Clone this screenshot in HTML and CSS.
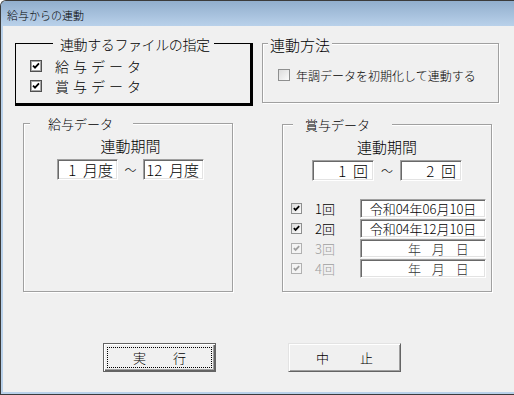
FILE: index.html
```html
<!DOCTYPE html>
<html lang="ja">
<head>
	<meta charset="UTF-8">
	<title>給与からの連動</title>
	<link rel="stylesheet" href="styles.css">
</head>
<body>
	<div class="window">
		<div class="titlebar">給与からの連動</div>
		<div class="client">
			<div class="row-top">
				<div class="group-file">
					<div class="legend legend-file">連動するファイルの指定</div>
					<div class="check-list">
						<div class="check-row">
							<span class="cb cb-3d"><svg viewBox="0 0 10 10"><path d="M2 4.6l2 2 4-4.2" fill="none" stroke="currentColor" stroke-width="1.8"/></svg></span>給与データ
						</div>
						<div class="check-row">
							<span class="cb cb-3d"><svg viewBox="0 0 10 10"><path d="M2 4.6l2 2 4-4.2" fill="none" stroke="currentColor" stroke-width="1.8"/></svg></span>賞与データ
						</div>
					</div>
				</div>
				<div class="group group-method">
					<div class="legend legend-method">連動方法</div>
					<div class="method-row">
						<span class="cb cb-flat"></span>年調データを初期化して連動する
					</div>
				</div>
			</div>

			<div class="row-data">
				<div class="group group-pay">
					<div class="legend legend-small legend-pay">給与データ</div>
					<div class="period period-pay">
						<div class="period-title">連動期間</div>
						<div class="period-inputs">
							<div class="field">1&nbsp;&nbsp;月度</div>
							<span class="tilde">～</span>
							<div class="field">12&nbsp;&nbsp;月度</div>
						</div>
					</div>
				</div>
				<div class="group group-bonus">
					<div class="legend legend-small legend-bonus">賞与データ</div>
					<div class="period">
						<div class="period-title">連動期間</div>
						<div class="period-inputs">
							<div class="field field-wide">1&nbsp;&nbsp;回</div>
							<span class="tilde tilde-wide">～</span>
							<div class="field field-wide">2&nbsp;&nbsp;回</div>
						</div>
					</div>
					<div class="date-list">
						<div class="date-row">
							<span class="cb cb-flat cb-small"><svg viewBox="0 0 10 10"><path d="M2 4.6l2 2 4-4.2" fill="none" stroke="currentColor" stroke-width="1.9"/></svg></span>
							<span class="date-label">1回</span>
							<div class="date-field">令和04年06月10日</div>
						</div>
						<div class="date-row">
							<span class="cb cb-flat cb-small"><svg viewBox="0 0 10 10"><path d="M2 4.6l2 2 4-4.2" fill="none" stroke="currentColor" stroke-width="1.9"/></svg></span>
							<span class="date-label">2回</span>
							<div class="date-field">令和04年12月10日</div>
						</div>
						<div class="date-row disabled">
							<span class="cb cb-flat cb-small"><svg viewBox="0 0 10 10"><path d="M2 4.6l2 2 4-4.2" fill="none" stroke="currentColor" stroke-width="1.9"/></svg></span>
							<span class="date-label">3回</span>
							<div class="date-field date-empty">年 月 日</div>
						</div>
						<div class="date-row disabled">
							<span class="cb cb-flat cb-small"><svg viewBox="0 0 10 10"><path d="M2 4.6l2 2 4-4.2" fill="none" stroke="currentColor" stroke-width="1.9"/></svg></span>
							<span class="date-label">4回</span>
							<div class="date-field date-empty">年 月 日</div>
						</div>
					</div>
				</div>
			</div>

			<div class="buttons">
				<button class="btn btn-default"><span>実</span><span>行</span></button>
				<button class="btn btn-cancel"><span>中</span><span>止</span></button>
			</div>
		</div>
	</div>
</body>
</html>
```

FILE: styles.css
```css
* {
	box-sizing: border-box;
}

body {
	margin: 0;
	background: #fff;
	color: #000;
	font-family: "Noto Sans CJK JP", "Noto Sans", sans-serif;
	font-weight: 300;
}

.window {
	display: flex;
	flex-direction: column;
	width: 514px;
	height: 395px;
	border: 1px solid #3b3b3b;
	border-right: 0;
	border-radius: 6px 0 0 0;
	background: #b9d1ea;
}

.titlebar {
	height: 25px;
	padding: 3px 0 0 6px;
	font-size: 11px;
	line-height: 22px;
	background: linear-gradient(#91aecd, #b9d1ea);
	border-radius: 5px 0 0 0;
}

.client {
	flex: 1;
	margin: 0 0 2px 2px;
	padding: 17px 0 0 12px;
	background: #f0f0f0;
}

/* group boxes */
.row-top {
	display: flex;
	align-items: flex-start;
	gap: 9px;
}

.group-file {
	width: 238px;
	height: 63px;
	border: solid #000;
	border-width: 1px 3px 3px 1px;
}

.group {
	border: 1px solid #a0a0a0;
	box-shadow: 1px 1px 0 #fff, inset 1px 1px 0 #fff;
}

.group-method {
	width: 237px;
	height: 60px;
}

.legend {
	width: fit-content;
	background: #f0f0f0;
	white-space: nowrap;
}
.legend-file {
	margin: -9px 0 0 37px;
	padding: 0 4px 0 7px;
	font-size: 14px;
	line-height: 18px;
	letter-spacing: -0.4px;
}
.legend-method {
	margin: -8px 0 0 5px;
	padding: 0 2px;
	font-size: 15px;
	line-height: 18px;
}
.legend-small {
	margin-top: -8px;
	font-size: 13px;
	line-height: 16px;
}
.legend-pay {
	margin-left: 6px;
	padding: 0 20px 0 18px;
}
.legend-bonus {
	margin-left: 10px;
	padding: 0 22px 0 12px;
}

/* checkboxes */
.cb {
	display: inline-block;
	flex: none;
	width: 12px;
	height: 12px;
	background: #fff;
}
.cb svg {
	display: block;
	width: 100%;
	height: 100%;
}
.cb-3d {
	border: 1px solid #505050;
	box-shadow: inset 0 0 0 1px #a8a8a8;
	margin-right: 13px;
}
.cb-flat {
	border: 1px solid #8e8f8f;
	background: linear-gradient(135deg, #dcdcdc, #fbfbfb);
	margin-right: 6px;
}
.cb-small {
	width: 11px;
	height: 11px;
	margin-right: 0;
}
.disabled .cb {
	border-color: #b1b1b1;
	background: #f4f4f4;
	color: #a0a0a0;
}

.check-list {
	margin-top: 3px;
	padding-left: 14px;
}
.check-row {
	display: flex;
	align-items: center;
	height: 20px;
	font-size: 14px;
	letter-spacing: 4px;
}

.method-row {
	display: flex;
	align-items: center;
	height: 20px;
	margin-top: 11px;
	padding-left: 15px;
	font-size: 12px;
}

/* data groups */
.row-data {
	display: flex;
	align-items: flex-start;
	gap: 49px;
	margin: 17px 0 0 8px;
}

.group-pay {
	width: 210px;
	height: 169px;
}
.group-bonus {
	width: 210px;
	height: 168px;
	margin-top: 1px;
}

.period {
	display: flex;
	flex-direction: column;
	align-items: center;
}
.period-pay {
	padding-left: 5px;
}
.period-title {
	margin-top: 5px;
	font-size: 15px;
	line-height: 18px;
}
.period-inputs {
	display: flex;
	align-items: center;
	margin-top: 4px;
}

.field,
.date-field {
	border: 1px solid;
	border-color: #a0a0a0 #fff #fff #a0a0a0;
	box-shadow: inset 1px 1px 0 #696969, inset -1px -1px 0 #e3e3e3;
	background: #fff;
	white-space: nowrap;
}
.field {
	width: 61px;
	height: 21px;
	padding-right: 4px;
	font-size: 15px;
	line-height: 19px;
	text-align: right;
}
.field-wide {
	width: 62px;
	padding-right: 5px;
}

.tilde {
	width: 15px;
	margin: 0 5px;
	font-size: 12px;
	text-align: center;
}
.tilde-wide {
	width: 16px;
}

.date-list {
	margin-top: 18px;
}
.date-row {
	display: flex;
	align-items: center;
	height: 19px;
	margin-bottom: 1px;
	padding-left: 8px;
	font-size: 13px;
}
.date-label {
	width: 45px;
	margin-left: 13px;
}
.disabled .date-label {
	color: #a0a0a0;
}
.date-field {
	width: 126px;
	height: 19px;
	line-height: 17px;
	text-align: center;
}
.date-empty {
	padding-left: 47px;
	text-align: left;
	word-spacing: 8px;
	color: #333;
}

/* buttons */
.buttons {
	display: flex;
	gap: 72px;
	margin: 51px 0 0 88px;
}

.btn {
	appearance: none;
	display: flex;
	align-items: center;
	justify-content: center;
	width: 113px;
	height: 29px;
	margin: 0;
	padding: 0;
	font: inherit;
	font-size: 13px;
	color: #000;
	background: #f0f0f0;
}
.btn-default {
	gap: 27px;
	border: 1px solid #646464;
	box-shadow: inset 1px 1px 0 #fff, inset -1px -1px 0 #646464, inset -2px -2px 0 #a0a0a0;
	outline: 1px dotted #000;
	outline-offset: -5px;
}
.btn-cancel {
	gap: 31px;
	border: 1px solid;
	border-color: #e3e3e3 #646464 #646464 #e3e3e3;
	box-shadow: inset 1px 1px 0 #fff, inset -1px -1px 0 #a0a0a0;
}
```
